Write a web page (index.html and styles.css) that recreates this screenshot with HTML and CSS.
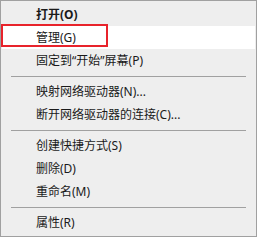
FILE: index.html
```html
<!DOCTYPE html>
<html lang="zh-CN">
<head>
  <meta charset="UTF-8">
  <title>右键菜单</title>
  <link rel="stylesheet" href="styles.css">
</head>
<body>

<div class="menu">
  <div class="menu-item bold">打开(O)</div>
  <div class="menu-item active">管理(G)<span class="mark"></span></div>
  <div class="menu-item">固定到“开始”屏幕(P)</div>
  <div class="sep"></div>
  <div class="menu-item">映射网络驱动器(N)...</div>
  <div class="menu-item">断开网络驱动器的连接(C)...</div>
  <div class="sep"></div>
  <div class="menu-item">创建快捷方式(S)</div>
  <div class="menu-item">删除(D)</div>
  <div class="menu-item">重命名(M)</div>
  <div class="sep"></div>
  <div class="menu-item">属性(R)</div>
</div>

</body>
</html>
```

FILE: styles.css
```css
body {
  margin: 0;
  background: #fff;
  font-family: "Noto Sans", "Noto Sans CJK SC", sans-serif;
  font-size: 12px;
  color: #1a1a1a;
}

.menu {
  width: 257px;
  height: 237px;
  box-sizing: border-box;
  background: #eeeeee;
  border: 1px solid #a0a0a0;
  padding: 2px 0;
  position: relative;
}

.menu-item {
  height: 23px;
  line-height: 23px;
  padding-left: 34px;
  margin: 0 1px;
  position: relative;
}

.menu-item.bold {
  font-weight: bold;
}

.menu-item.active {
  background: #fff;
}

.mark {
  position: absolute;
  left: -1px;
  top: -2px;
  width: 103px;
  height: 19px;
  border: 2px solid #e8232b;
}

.sep {
  height: 8px;
  display: flex;
  align-items: center;
  padding: 0 10px;
}

.sep::before {
  content: "";
  flex: 1;
  height: 1px;
  background: #a0a0a0;
}
```
